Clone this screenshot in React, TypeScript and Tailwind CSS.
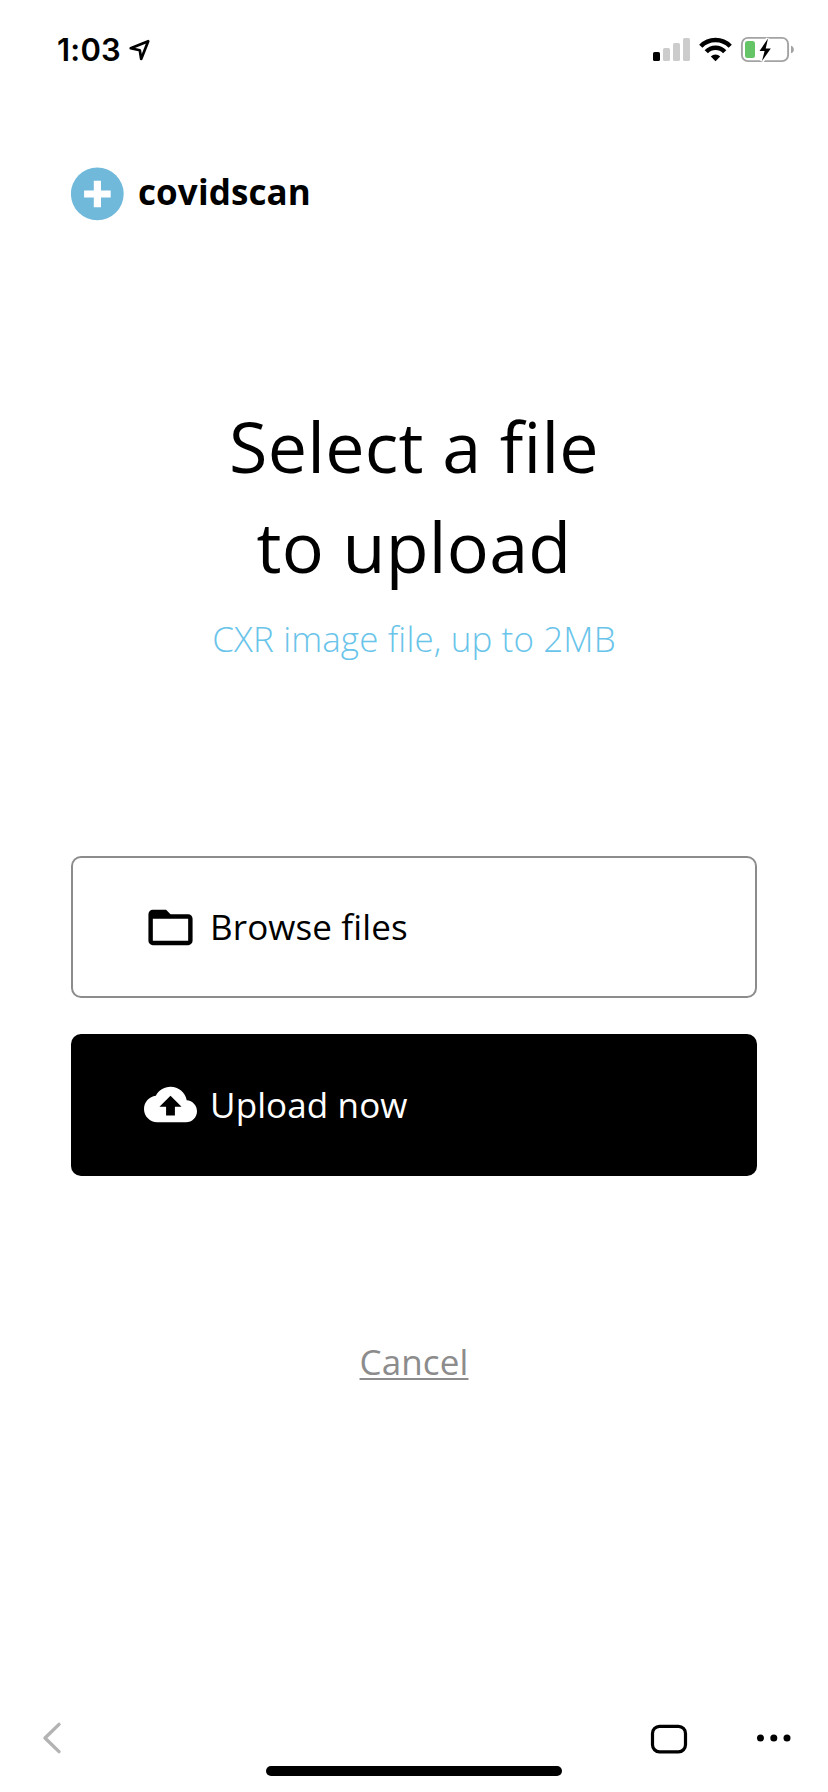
import React from "react";

function StatusBar() {
  return (
    <div className="flex h-[100px] items-start justify-between pl-[57px] pr-[34px]">
      <div className="flex items-start pt-[30px]">
        <span className="font-['Inter',sans-serif] text-[31px] leading-[40px] font-semibold tracking-[0.2px] whitespace-nowrap">1:03</span>
        <svg className="ml-[7px] mt-[7px]" width="24" height="26" viewBox="0 0 24 26" fill="none" stroke="black" strokeWidth="2.7" strokeLinejoin="round">
          <path d="M20.2 4.2 L2.7 11.2 L11.8 13.2 L13.2 22 Z" />
        </svg>
      </div>
      <svg className="mt-[30px]" width="146" height="40" viewBox="648 30 146 40">
        <rect x="653" y="52" width="7" height="9" rx="1.6" />
        <rect x="663" y="48" width="7" height="13" rx="1.6" fill="#cccccc" />
        <rect x="673" y="43" width="7" height="18" rx="1.6" fill="#cccccc" />
        <rect x="683" y="38" width="7" height="23" rx="1.6" fill="#cccccc" />
        <g fill="none" stroke="black" strokeWidth="4.5">
          <path d="M700.8 46.2 A20.5 20.5 0 0 1 730.2 46.2" />
          <path d="M706.3 51.8 A12.6 12.6 0 0 1 724.7 51.8" />
        </g>
        <path d="M715.5 61.2 L710.8 56.4 A6.8 6.8 0 0 1 720.2 56.4 Z" />
        <rect x="741.9" y="37.9" width="46.2" height="23.2" rx="6" fill="none" stroke="#a3a3a3" strokeWidth="1.9" />
        <rect x="745" y="41" width="10" height="17" rx="2.5" fill="#65c466" />
        <path d="M791 45.7 C794.8 46.5 794.8 52.5 791 53.3 Z" fill="#a3a3a3" />
        <path d="M768 38.5 L759.5 51 H764.6 L762 61 L770.8 48.4 H765.7 Z" fill="black" stroke="white" strokeWidth="4" paintOrder="stroke" />
      </svg>
    </div>
  );
}

function Logo() {
  return (
    <div className="flex h-[54px] items-center pl-[71px]">
      <svg width="53" height="54" viewBox="0 0 53 54">
        <circle cx="26.3" cy="26.8" r="26.4" fill="#70b9db" />
        <path d="M22.8 13.7 h7.2 v9.7 h9.7 v7.2 h-9.7 v9.6 h-7.2 v-9.6 h-9.7 v-7.2 h9.7 Z" fill="white" />
      </svg>
      <span className="mb-[4px] ml-[14px] text-[35px] leading-[48px] font-bold tracking-[0.1px] whitespace-nowrap">covidscan</span>
    </div>
  );
}

function FolderIcon() {
  return (
    <svg width="53" height="53" viewBox="0 0 24 24" fill="currentColor">
      <path d="M20 6h-8l-2-2H4c-1.1 0-1.99.9-1.99 2L2 18c0 1.1.9 2 2 2h16c1.1 0 2-.9 2-2V8c0-1.1-.9-2-2-2zm0 12H4V8h16v10z" />
    </svg>
  );
}

function CloudUploadIcon() {
  return (
    <svg className="mb-[2px]" width="53" height="53" viewBox="0 0 24 24" fill="currentColor">
      <path d="M19.35 10.04C18.67 6.59 15.64 4 12 4 9.11 4 6.6 5.64 5.35 8.04 2.34 8.36 0 10.91 0 14c0 3.31 2.69 6 6 6h13c2.76 0 5-2.24 5-5 0-2.64-2.05-4.78-4.65-4.96zM14 13v4h-4v-4H7l5-5 5 5h-3z" />
    </svg>
  );
}

function BottomBar() {
  return (
    <nav className="mt-auto flex h-[92px] flex-col">
      <div className="flex h-[66px] items-center pt-[10px]">
        <button className="ml-[42px]" aria-label="Back">
          <svg width="20" height="34" viewBox="0 0 20 34" fill="none" stroke="#b3b3b3" strokeWidth="3.4" strokeLinecap="round" strokeLinejoin="round">
            <path d="M17 3.4 L3 17 L17 30.6" />
          </svg>
        </button>
        <button className="mt-[2px] ml-[588px]" aria-label="Tabs">
          <svg width="38" height="30" viewBox="0 0 38 30" fill="none" stroke="black" strokeWidth="3.2">
            <rect x="2.5" y="2.4" width="33" height="25.4" rx="7" />
          </svg>
        </button>
        <button className="ml-[68px]" aria-label="More">
          <svg width="36" height="10" viewBox="0 0 36 10">
            <circle cx="4.5" cy="5" r="3.5" />
            <circle cx="17.8" cy="5" r="3.5" />
            <circle cx="31" cy="5" r="3.5" />
          </svg>
        </button>
      </div>
      <div className="mx-auto h-[10px] w-[296px] rounded-full bg-black" />
    </nav>
  );
}

export default function App() {
  return (
    <div className="flex h-[1792px] w-[828px] flex-col bg-white font-['Open_Sans',sans-serif] text-black">
      <StatusBar />
      <header className="pt-[67px]">
        <Logo />
      </header>
      <main className="flex flex-col items-center pt-[175px]">
        <h1 className="text-center text-[70px] leading-[100px] tracking-[0.25px] whitespace-nowrap">
          Select a file
          <br />
          to upload
        </h1>
        <p className="mt-[19px] text-[35px] leading-[48px] font-light tracking-[0.12px] whitespace-nowrap text-[#69c4ea]">CXR image file, up to 2MB</p>
        <div className="mt-[193px] flex w-[686px] flex-col gap-[36px]">
          <button className="flex h-[142px] items-center rounded-[10px] border-2 border-[#8c8c8c] pl-[71px]">
            <FolderIcon />
            <span className="ml-[13px] text-[35px] leading-[48px] tracking-[0.12px] whitespace-nowrap">Browse files</span>
          </button>
          <button className="flex h-[142px] items-center rounded-[10px] bg-black pl-[73px] text-white">
            <CloudUploadIcon />
            <span className="ml-[13px] text-[35px] leading-[48px] tracking-[0.12px] whitespace-nowrap">Upload now</span>
          </button>
        </div>
        <a className="mt-[162px] text-[35px] leading-[48px] tracking-[0.12px] whitespace-nowrap text-[#8c8c8c] underline decoration-2 underline-offset-[3px]">Cancel</a>
      </main>
      <BottomBar />
    </div>
  );
}
